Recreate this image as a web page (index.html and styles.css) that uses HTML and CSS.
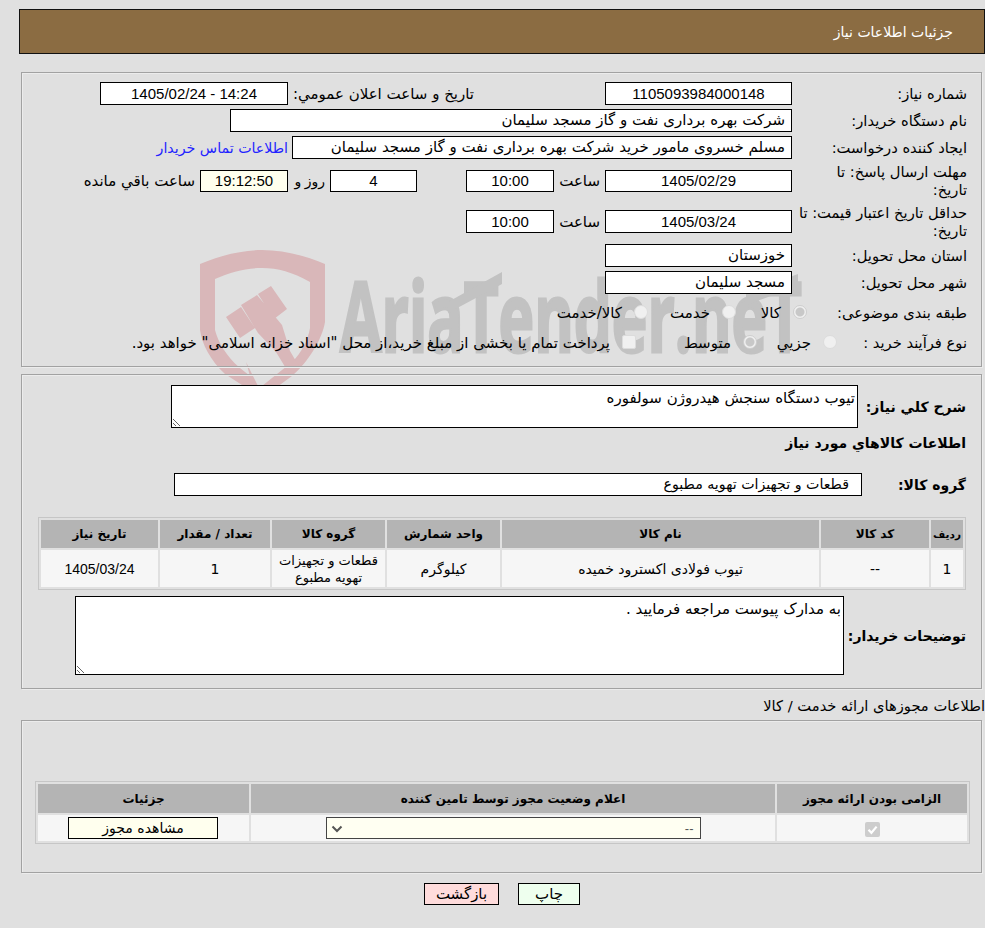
FILE: index.html
```html
<!DOCTYPE html>
<html lang="fa" dir="rtl">
<head>
<meta charset="utf-8">
<title>جزئیات اطلاعات نیاز</title>
<link rel="stylesheet" href="styles.css">
</head>
<body>
<svg class="watermark" viewBox="195 245 640 141" aria-hidden="true">
  <path class="wm-red" fill-rule="evenodd" d="M200 264 C222 255 242 250 262 250 C282 250 304 255 325 264 L325 322 C322 340 308 362 292 376 L262 398 L225 374 C210 360 202 344 200 330 Z M215 279 L215 330 C218 342 226 356 240 368 L250 376 L246 362 L258 386 L262 386 L292 362 C302 352 308 340 310 328 L310 282 C292 272 278 268 262 268 C246 268 230 272 215 279 Z"/>
  <path class="wm-red" d="M226 317 L241 307 L255 328 L240 338 Z M241 305 L257 295 L282 325 L290 351 L300 368 L290 375 L276 352 L258 333 Z M258 294 L271 286 L287 309 L274 319 Z"/>
  <text class="wm-text" x="340" y="352" textLength="462" lengthAdjust="spacingAndGlyphs" direction="ltr">AriaTender.neT</text>
  <path class="wm-grey" d="M448 302 L502 272 L502 284 L448 313 Z M746 293 L798 274 L798 286 L746 305 Z"/>
</svg>

<main class="page">
  <header class="title-bar">جزئیات اطلاعات نیاز</header>

  <section class="panel panel-info">
    <div class="row">
      <div class="label">شماره نیاز:</div>
      <div class="field w187 center num">1105093984000148</div>
      <div class="label-mid">تاریخ و ساعت اعلان عمومي:</div>
      <div class="field w188 center num">14:24 - 1405/02/24</div>
    </div>
    <div class="row">
      <div class="label">نام دستگاه خریدار:</div>
      <div class="field w562">شرکت بهره برداری نفت و گاز مسجد سلیمان</div>
    </div>
    <div class="row">
      <div class="label">ایجاد کننده درخواست:</div>
      <div class="field w500">مسلم خسروی مامور خرید شرکت بهره برداری نفت و گاز مسجد سلیمان</div>
      <a class="contact" href="#">اطلاعات تماس خریدار</a>
    </div>
    <div class="row row-tall">
      <div class="label">مهلت ارسال پاسخ: تا<br>تاریخ:</div>
      <div class="field w187 center num h22">1405/02/29</div>
      <div class="unit">ساعت</div>
      <div class="field w88 center num h22">10:00</div>
      <div class="field w87 center num h22 gap-days">4</div>
      <div class="unit-days">روز و</div>
      <div class="field w88 center num h22 timer">19:12:50</div>
      <div class="unit-left">ساعت باقي مانده</div>
    </div>
    <div class="row row-tall2">
      <div class="label">حداقل تاریخ اعتبار قیمت: تا<br>تاریخ:</div>
      <div class="field w187 center num">1405/03/24</div>
      <div class="unit">ساعت</div>
      <div class="field w88 center num">10:00</div>
    </div>
    <div class="row">
      <div class="label">استان محل تحویل:</div>
      <div class="field w187">خوزستان</div>
    </div>
    <div class="row">
      <div class="label">شهر محل تحویل:</div>
      <div class="field w187">مسجد سلیمان</div>
    </div>
    <div class="row row-choice">
      <div class="label lb-cat">طبقه بندی موضوعی:</div>
      <label class="choice c-kala"><input class="radio" type="radio" name="cat" checked disabled><span>کالا</span></label>
      <label class="choice c-khedmat"><input class="radio" type="radio" name="cat" disabled><span>خدمت</span></label>
      <label class="choice"><input class="radio" type="radio" name="cat" disabled><span>کالا/خدمت</span></label>
    </div>
    <div class="row row-choice">
      <div class="label lb-proc">نوع فرآیند خرید :</div>
      <label class="choice c-jozi"><input class="radio" type="radio" name="proc" disabled><span>جزيي</span></label>
      <label class="choice c-mid"><input class="radio" type="radio" name="proc" checked disabled><span>متوسط</span></label>
      <label class="choice"><input class="box" type="checkbox" disabled><span>پرداخت تمام یا بخشی از مبلغ خرید،از محل "اسناد خزانه اسلامی" خواهد بود.</span></label>
    </div>
  </section>

  <section class="panel panel-goods">
    <div class="row-area">
      <div class="label-bold lb-sharh">شرح كلي نياز:</div>
      <textarea class="area area-sharh" readonly>تیوب دستگاه سنجش هیدروژن سولفوره</textarea>
    </div>
    <h2 class="goods-title">اطلاعات كالاهاي مورد نياز</h2>
    <div class="row-group">
      <div class="label-bold lb-group">گروه کالا:</div>
      <div class="field w688 indent">قطعات و تجهیزات تهویه مطبوع</div>
    </div>
    <table class="grid grid-goods">
      <thead>
        <tr>
          <th class="g1">ردیف</th><th class="g2">کد کالا</th><th class="g3">نام کالا</th><th class="g4">واحد شمارش</th><th class="g5">گروه کالا</th><th class="g6">تعداد / مقدار</th><th class="g7">تاریخ نیاز</th>
        </tr>
      </thead>
      <tbody>
        <tr>
          <td>1</td><td>--</td><td>تیوب فولادی اکسترود خمیده</td><td>کیلوگرم</td><td class="tight">قطعات و تجهیزات تهویه مطبوع</td><td>1</td><td class="latin">1405/03/24</td>
        </tr>
      </tbody>
    </table>
    <div class="row-area row-notes">
      <div class="label-bold lb-notes">توضیحات خریدار:</div>
      <textarea class="area area-notes" readonly>به مدارک پیوست مراجعه فرمایید .</textarea>
    </div>
  </section>

  <h3 class="license-title">اطلاعات مجوزهای ارائه خدمت / کالا</h3>

  <section class="panel panel-license">
    <table class="grid grid-license">
      <thead>
        <tr><th class="l1">الزامی بودن ارائه مجوز</th><th class="l2">اعلام وضعیت مجوز توسط تامین کننده</th><th class="l3">جزئیات</th></tr>
      </thead>
      <tbody>
        <tr>
          <td><span class="checked-box"><svg viewBox="0 0 15 15" width="15" height="15" aria-hidden="true"><path d="M3.5 7.8 L6.4 10.8 L11.6 4.6" fill="none" stroke="#fff" stroke-width="2.2"/></svg></span></td>
          <td><select class="status"><option>--</option></select></td>
          <td><button class="view" type="button">مشاهده مجوز</button></td>
        </tr>
      </tbody>
    </table>
  </section>

  <div class="actions">
    <button class="btn btn-print" type="button">چاپ</button>
    <button class="btn btn-back" type="button">بازگشت</button>
  </div>
</main>
</body>
</html>
```
FILE: styles.css
```css
* { box-sizing: border-box; }
html, body { margin: 0; padding: 0; }
body {
  position: relative;
  min-height: 928px;
  background: #e0e0e0;
  color: #000;
  font-family: "DejaVu Sans", sans-serif;
  font-size: 15px;
  line-height: 18px;
  overflow: hidden;
}
.watermark { position: absolute; left: 195px; top: 245px; width: 640px; height: 141px; }
.wm-red { fill: #d9b7b9; }
.wm-grey { fill: #c2c2c2; }
.wm-text { fill: #c2c2c2; stroke: #c2c2c2; stroke-width: 3px; font-family: "Open Sans", sans-serif; font-weight: 700; font-size: 97px; }
.page { position: relative; width: 985px; }

.title-bar {
  margin: 9px 0 0 19px;
  height: 45px;
  padding-right: 31px;
  background: #8b6c42;
  border: 1px solid #111;
  color: #fff;
  line-height: 44px;
  font-size: 14px;
}

.panel {
  border: 1px solid #a2a2a2;
  box-shadow: inset 1px 1px 0 #ececec, 1px 1px 0 #ececec;
  margin-left: 21px;
  margin-right: 3px;
}
.panel-info { margin-top: 18px; height: 295px; padding: 9px 14px 0 0; }
.panel-goods { margin-top: 7px; height: 315px; padding: 10px 15px 0 0; }
.panel-license { margin-top: 4px; height: 153px; padding: 60px 11px 0 0; }

.row { display: flex; align-items: center; height: 23px; margin-bottom: 4px; }
.row-tall { height: 36px; }
.row-tall2 { height: 37px; margin-bottom: 4px; }
.row-choice { height: 30px; margin-bottom: 0; }
.label { width: 175px; flex: none; padding-left: 3px; font-size: 14.7px; }
.lb-cat { width: 160px; }
.lb-proc { width: 130px; }

.field {
  flex: none;
  height: 23px;
  border: 1px solid #000;
  background: #fff;
  padding: 0 6px 0 2px;
  line-height: 21px;
  white-space: nowrap;
  overflow: hidden;
}
.h22 { height: 22px; line-height: 19px; }
.center { text-align: center; padding: 0; }
.num { font-family: "Liberation Sans", sans-serif; font-size: 15px; }
.w187 { width: 187px; }
.w188 { width: 188px; }
.w562 { width: 562px; }
.w500 { width: 500px; }
.w88 { width: 88px; }
.w87 { width: 87px; }
.w688 { width: 688px; font-size: 14.2px; }
.indent { padding-right: 12px; }
.timer { background: #ffffee; margin-right: 9px; }
.gap-days { margin-right: 49px; }

.label-mid { width: 181px; flex: none; margin: 0 131px 0 5px; white-space: nowrap; }
.contact { margin-right: 4px; color: #2222ff; font-size: 14.2px; text-decoration: none; white-space: nowrap; }
.unit { width: 42px; flex: none; margin: 0 5px 0 4px; }
.unit-days { width: 28px; flex: none; margin-right: 5px; font-size: 14px; word-spacing: -1px; white-space: nowrap; }
.unit-left { width: 112px; flex: none; margin-right: 5px; white-space: nowrap; }

.choice { display: flex; align-items: center; flex: none; white-space: nowrap; }
.c-kala { width: 71px; }
.c-khedmat { width: 88px; }
.c-jozi { width: 80px; }
.c-mid { width: 121px; }
.radio, .box {
  appearance: none;
  flex: none;
  width: 14px;
  height: 14px;
  margin: -3px 0 0 12px;
  background: #f0f0f0;
  border: 1px solid #dcdcdc;
}
.radio { border-radius: 50%; }
.radio:checked { background: radial-gradient(circle, #c8c8c8 0 4px, #f0f0f0 5px); border-color: #cfcfcf; }
.box { border-radius: 2px; }

.row-area { display: flex; align-items: center; }
.label-bold { flex: none; font-weight: 700; font-size: 14px; white-space: nowrap; }
.lb-sharh { width: 108px; }
.lb-notes { width: 122px; }
.lb-group { width: 104px; }
.area {
  flex: none;
  display: block;
  margin: 0;
  border: 1px solid #000;
  border-radius: 0;
  background: #fff;
  color: #000;
  padding: 3px 2px 2px;
  font: inherit;
  outline: none;
}
.area-sharh { width: 687px; height: 43px; }
.area-notes { width: 769px; height: 79px; }
.goods-title { margin: 5px 0 0; height: 20px; line-height: 20px; font-size: 14px; font-weight: 700; }
.row-group { display: flex; align-items: center; margin-top: 20px; }
.row-notes { margin-top: 6px; }

.grid {
  table-layout: fixed;
  border-collapse: separate;
  border-spacing: 2px;
  border: 1px solid #c6c6c6;
}
.grid th { background: #b4b4b4; font-size: 12px; font-weight: 700; padding: 0; text-align: center; color: #000; }
.grid td { background: #f6f6f6; padding: 0; text-align: center; font-size: 14px; }
.grid-goods { width: 928px; margin-top: 21px; }
.grid-goods th { height: 28px; }
.grid-goods td { height: 37px; }
.grid .latin { font-family: "Liberation Sans", sans-serif; }
.grid .tight { line-height: 17px; padding: 0 6px; font-size: 13px; }
.grid .g1 { width: 32px; font-size: 10.5px; }
.g2 { width: 108px; }
.g3 { width: 317px; }
.g4 { width: 113px; }
.g5 { width: 113px; }
.g6 { width: 110px; }
.g7 { width: 117px; }

.license-title { margin: 7px 0 0; height: 20px; line-height: 20px; font-size: 14.7px; font-weight: 400; white-space: nowrap; }
.grid-license { width: 935px; }
.grid-license th { height: 29px; }
.grid-license td { height: 26px; }
.l1 { width: 190px; }
.l2 { width: 524px; }
.l3 { width: 211px; }
.checked-box { display: inline-block; width: 15px; height: 15px; background: #cdcdcd; border-radius: 2px; vertical-align: middle; }
.checked-box svg { display: block; }
.status {
  appearance: none;
  display: block;
  width: 375px;
  height: 22px;
  margin: 0 auto;
  padding: 0 6px;
  border: 1px solid #444;
  border-radius: 0;
  background: #fffff2 url("data:image/svg+xml,%3Csvg xmlns='http://www.w3.org/2000/svg' width='12' height='8'%3E%3Cpath d='M1.5 1.5 L6 6 L10.5 1.5' fill='none' stroke='%23555' stroke-width='2'/%3E%3C/svg%3E") no-repeat 4px 7px;
  color: #555;
  font: 13px "Liberation Sans", sans-serif;
}
.view {
  display: block;
  width: 150px;
  height: 22px;
  margin: 0 31px 0 0;
  padding: 0;
  border: 1px solid #000;
  background: #ffffee;
  color: #000;
  font: inherit;
}

.actions { display: flex; gap: 19px; margin: 10px 405px 0 0; }
.btn { height: 22px; padding: 0; border: 1px solid #000; color: #000; font: inherit; }
.btn-print { width: 62px; background: #eeffee; }
.btn-back { width: 75px; background: #ffdcdc; }
```
